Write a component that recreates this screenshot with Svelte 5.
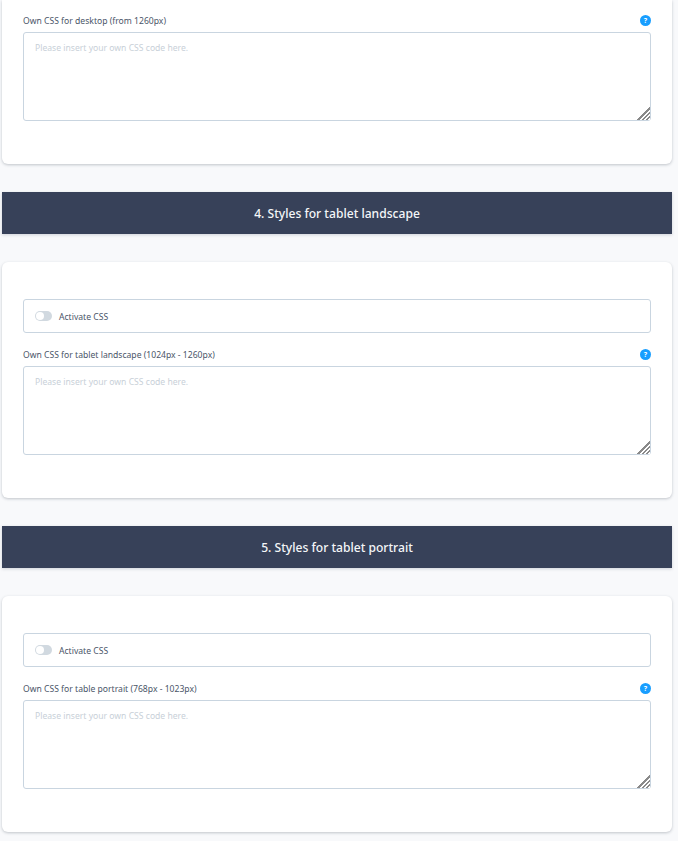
<script lang="ts">
  const sections = [
    {
      heading: "4. Styles for tablet landscape",
      label: "Own CSS for tablet landscape (1024px - 1260px)",
    },
    {
      heading: "5. Styles for tablet portrait",
      label: "Own CSS for table portrait (768px - 1023px)",
    },
  ];
</script>

{#snippet cssField(label: string)}
  <div class="field-head">
    <span class="field-label">{label}</span>
    <span class="help" aria-label="Help">?</span>
  </div>
  <textarea class="css-input" placeholder="Please insert your own CSS code here."></textarea>
{/snippet}

<div class="page">
  <section class="card card-cut">
    {@render cssField("Own CSS for desktop (from 1260px)")}
  </section>

  {#each sections as section}
    <h2 class="band">{section.heading}</h2>
    <section class="card">
      <div class="activate">
        <span class="toggle"><span class="knob"></span></span>
        <span class="activate-text">Activate CSS</span>
      </div>
      {@render cssField(section.label)}
    </section>
  {/each}
</div>

<style>
  :global(body) {
    background: #f8f9fb;
  }

  .page {
    display: flex;
    flex-direction: column;
    gap: 28px;
    width: 670px;
    margin-left: 2px;
    padding-bottom: 9px;
    font-family: "Noto Sans", "Open Sans", sans-serif;
  }

  .card {
    padding: 37px 21px 43px;
    background: #fff;
    border-radius: 6px;
    box-shadow: 0 1px 3px rgba(50, 60, 80, 0.28);
  }

  .card-cut {
    padding-top: 13px;
    border-radius: 0 0 6px 6px;
  }

  .band {
    display: flex;
    align-items: center;
    justify-content: center;
    height: 42px;
    margin: 0;
    background: #374159;
    color: #f4f6f8;
    font-size: 12.1px;
    font-weight: 500;
    box-shadow: 0 1px 3px rgba(50, 60, 80, 0.2);
  }

  .activate {
    display: flex;
    align-items: center;
    gap: 7px;
    height: 34px;
    box-sizing: border-box;
    padding: 0 11px;
    border: 1px solid #c9d5e0;
    border-radius: 3px;
  }

  .activate-text {
    padding-top: 2px;
    color: #4a5568;
    font-size: 8.6px;
  }

  .toggle {
    display: block;
    width: 17px;
    height: 10px;
    background: #d1d9e0;
    border-radius: 5px;
  }

  .knob {
    display: block;
    width: 8px;
    height: 8px;
    margin: 1px;
    background: #fff;
    border-radius: 50%;
  }

  .field-head {
    display: flex;
    align-items: center;
    justify-content: space-between;
    height: 14px;
    margin-top: 14px;
    margin-bottom: 5px;
  }

  .card-cut .field-head {
    margin-top: 0;
  }

  .field-label {
    padding-top: 2px;
    color: #4a5568;
    font-size: 8.6px;
  }

  .help {
    display: flex;
    align-items: center;
    justify-content: center;
    width: 11px;
    height: 11px;
    background: #189eff;
    border-radius: 50%;
    color: #fff;
    font-size: 7px;
    font-weight: 700;
  }

  .css-input {
    display: block;
    width: 100%;
    height: 89px;
    box-sizing: border-box;
    padding: 9px 11px;
    background: #fff;
    border: 1px solid #c9d5e0;
    border-radius: 3px;
    font-family: inherit;
    font-size: 8.6px;
    outline: none;
    resize: vertical;
  }

  .css-input::placeholder {
    color: #c8d0d8;
    opacity: 1;
  }

  .css-input::-webkit-resizer {
    background:
      linear-gradient(135deg, #fff 50%, transparent 50%),
      repeating-linear-gradient(135deg, #8a8a8a 0 1.5px, #fff 1.5px 3px);
  }
</style>
